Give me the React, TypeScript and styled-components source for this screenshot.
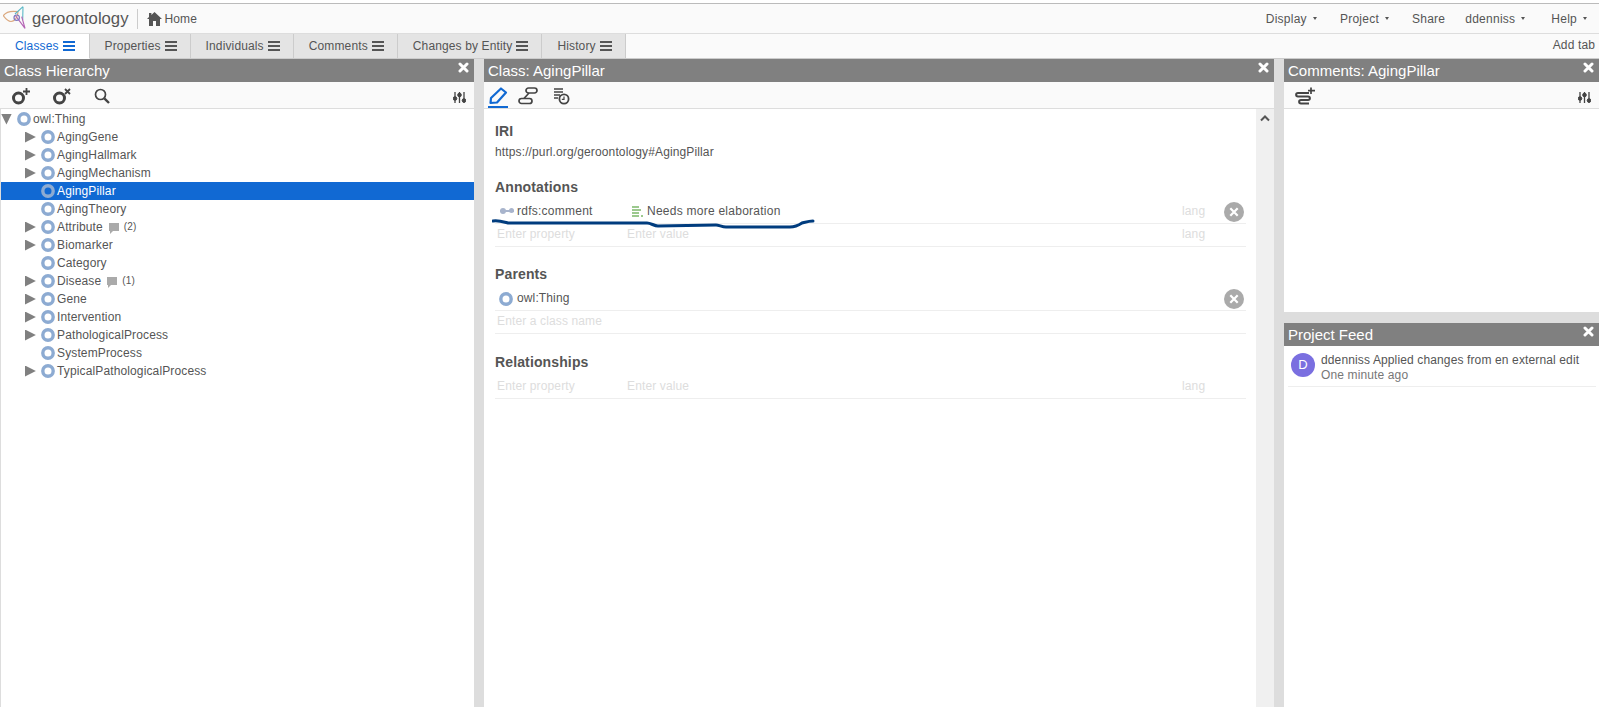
import { ReactNode } from 'react';
import styled, { createGlobalStyle } from 'styled-components';

const treeRows = [
  { name: 'AgingGene', expandable: true },
  { name: 'AgingHallmark', expandable: true },
  { name: 'AgingMechanism', expandable: true },
  { name: 'AgingPillar', selected: true },
  { name: 'AgingTheory' },
  { name: 'Attribute', expandable: true, comments: 2 },
  { name: 'Biomarker', expandable: true },
  { name: 'Category' },
  { name: 'Disease', expandable: true, comments: 1 },
  { name: 'Gene', expandable: true },
  { name: 'Intervention', expandable: true },
  { name: 'PathologicalProcess', expandable: true },
  { name: 'SystemProcess' },
  { name: 'TypicalPathologicalProcess', expandable: true },
];

const tabs = ['Classes', 'Properties', 'Individuals', 'Comments', 'Changes by Entity', 'History'];

const Logo = () => (
  <svg width="24" height="25" viewBox="0 0 24 25" fill="none">
    <path
      d="M0.3 9.7 C3 6 8 4.5 15 5.7 C15 10 12 15.5 8 15.5 C4.5 15.5 2 12 0.3 9.7Z"
      stroke="#dba97f"
      strokeWidth="1.2"
    />
    <path d="M20 0.7 L12 8 M20 0.7 L19.7 14" stroke="#5ab8c6" strokeWidth="1.1" />
    <path d="M12 9 L22 22.3 L18.7 10.7" stroke="#b565b5" strokeWidth="1.2" />
    <circle cx="13.7" cy="11.7" r="2.7" stroke="#7f78c0" strokeWidth="1.2" />
  </svg>
);

const HomeIcon = () => (
  <svg width="15" height="14" viewBox="0 0 15 14">
    <path fill="#555" d="M7.5 0 L15 7 H13 V14 H9 V9 H6 V14 H2 V7 H0 L2 5.1 V1 H4.4 V2.9Z" />
  </svg>
);

const CloseIcon = () => (
  <svg width="11" height="11" viewBox="0 0 11 11">
    <path d="M2 2 L9 9 M9 2 L2 9" stroke="#fff" strokeWidth="3" strokeLinecap="round" />
  </svg>
);

const ClassIcon = () => (
  <svg width="14" height="14" viewBox="0 0 14 14">
    <circle cx="7" cy="7" r="5.2" fill="none" stroke="#8dabd2" strokeWidth="3.4" />
  </svg>
);

const ClassActionIcon = ({ mark }: { mark: 'add' | 'remove' }) => (
  <svg width="20" height="18" viewBox="0 0 20 18" fill="none" stroke="#444">
    <circle cx="7.5" cy="11" r="5" strokeWidth="3" />
    {mark === 'add' ? (
      <path d="M15.5 1 V8 M12 4.5 H19" strokeWidth="1.8" />
    ) : (
      <path d="M13 2 L18 7 M18 2 L13 7" strokeWidth="1.8" />
    )}
  </svg>
);

const SearchIcon = () => (
  <svg width="16" height="16" viewBox="0 0 16 16" fill="none" stroke="#444">
    <circle cx="6.5" cy="6.5" r="5" strokeWidth="1.7" />
    <path d="M10.3 10.3 L15 15" strokeWidth="2.4" />
  </svg>
);

const SlidersIcon = () => (
  <SlidersSvg width="13" height="11" viewBox="0 0 13 11" fill="#444" stroke="#444">
    <path d="M2 0 V11 M6.5 0 V11 M11 0 V11" strokeWidth="1.3" />
    <circle cx="2" cy="6.5" r="1.8" />
    <circle cx="6.5" cy="3" r="1.8" />
    <circle cx="11" cy="8.5" r="1.8" />
  </SlidersSvg>
);

const PencilIcon = () => (
  <svg width="20" height="18" viewBox="0 0 20 18" fill="none" stroke="#1169d3">
    <path d="M13 1.5 L18 5.5 L9 15.5 L2.5 16 L3 11Z" strokeWidth="2.2" strokeLinejoin="round" />
  </svg>
);

const RouteIcon = () => (
  <svg width="20" height="18" viewBox="0 0 20 18" fill="none" stroke="#444" strokeWidth="1.7">
    <rect x="8" y="1" width="11" height="5" rx="2.5" />
    <rect x="1" y="11.5" width="13" height="5" rx="2.5" />
    <path d="M11 6 L6 11.5" />
  </svg>
);

const HistoryIcon = () => (
  <svg width="17" height="18" viewBox="0 0 17 18" fill="none" stroke="#444">
    <path d="M1 2 H10 M1 5 H10 M1 8 H7 M1 11 H5" strokeWidth="1.4" />
    <circle cx="11" cy="12" r="4.6" strokeWidth="1.8" />
    <path d="M11 9.5 V12.3 H8.8" strokeWidth="1.2" />
  </svg>
);

const CommentAddIcon = () => (
  <svg width="21" height="19" viewBox="0 0 21 19" fill="none" stroke="#444">
    <path
      d="M14 6 H3 C0.5 6 0.5 9.5 3 9.5 H13 C15.5 9.5 15.5 13 13 13 H6 C3.5 13 3.5 16.5 6 16.5 H14"
      strokeWidth="2"
    />
    <path d="M16 0.5 V7 M13 3.7 H20" strokeWidth="1.7" />
  </svg>
);

const Bars = styled('span')<{ $active?: boolean }>`
  display: inline-block;
  width: 12px;
  height: 2px;
  padding: 2px 0;
  box-sizing: content-box;
  border-top: 2px solid ${(p) => (p.$active ? '#1169d3' : '#555')};
  border-bottom: 2px solid ${(p) => (p.$active ? '#1169d3' : '#555')};
  background: ${(p) => (p.$active ? '#1169d3' : '#555')};
  background-clip: content-box;
`;

const Panel = ({
  title,
  toolbar,
  inset,
  children,
}: {
  title: string;
  toolbar?: ReactNode;
  inset?: number;
  children?: ReactNode;
}) => (
  <>
    <PanelHeader>
      <PanelTitle>{title}</PanelTitle>
      <CloseIcon />
    </PanelHeader>
    {toolbar && <Toolbar $inset={inset ?? 11}>{toolbar}</Toolbar>}
    {children}
  </>
);

const App = () => (
  <>
    <GlobalStyle />
    <Page>
      <NavBar>
        <LogoSlot>
          <Logo />
        </LogoSlot>
        <Brand>geroontology</Brand>
        <HomeLink>
          <HomeIcon />
          Home
        </HomeLink>
        <NavMenu>
          <NavItem>
            Display<Caret />
          </NavItem>
          <NavItem>
            Project<Caret />
          </NavItem>
          <NavItem>Share</NavItem>
          <NavItem $trailing={3}>
            ddenniss<Caret />
          </NavItem>
          <NavItem>
            Help<Caret />
          </NavItem>
        </NavMenu>
      </NavBar>

      <TabBar>
        {tabs.map((tab, index) => (
          <Tab key={tab} $active={index === 0}>
            {tab}
            <Bars $active={index === 0} />
          </Tab>
        ))}
        <AddTab>Add tab</AddTab>
      </TabBar>

      <Main>
        <HierarchyColumn>
          <Panel
            title="Class Hierarchy"
            toolbar={
              <>
                <ToolSlot $width={41}>
                  <ClassActionIcon mark="add" />
                </ToolSlot>
                <ToolSlot $width={42}>
                  <ClassActionIcon mark="remove" />
                </ToolSlot>
                <ToolSlot $width={40}>
                  <SearchIcon />
                </ToolSlot>
                <ToolEnd>
                  <SlidersIcon />
                </ToolEnd>
              </>
            }
          >
            <Tree>
              <TreeRow>
                <Twisty $open />
                <ClassIcon />
                <TreeLabel>owl:Thing</TreeLabel>
              </TreeRow>
              {treeRows.map((row) => (
                <TreeRow key={row.name} $selected={row.selected} $child>
                  {row.expandable ? <Twisty /> : <TwistyGap />}
                  <ClassIcon />
                  <TreeLabel>{row.name}</TreeLabel>
                  {row.comments && (
                    <>
                      <CommentBubble />
                      <CommentCount>({row.comments})</CommentCount>
                    </>
                  )}
                </TreeRow>
              ))}
            </Tree>
          </Panel>
        </HierarchyColumn>

        <ClassColumn>
          <Panel
            title="Class: AgingPillar"
            inset={4}
            toolbar={
              <>
                <ViewSlot $active $width={20}>
                  <PencilIcon />
                </ViewSlot>
                <ViewSlot $width={25}>
                  <RouteIcon />
                </ViewSlot>
                <ViewSlot $width={17}>
                  <HistoryIcon />
                </ViewSlot>
              </>
            }
          >
            <ClassBody>
              <Form>
                <Section>
                  <Heading>IRI</Heading>
                  <Iri>https://purl.org/geroontology#AgingPillar</Iri>
                </Section>

                <Section>
                  <Heading>Annotations</Heading>
                  <Row>
                    <Cell $inset={5}>
                      <PropertyDot />
                      rdfs:comment
                    </Cell>
                    <Cell $inset={7}>
                      <ValueLines />
                      Needs more elaboration
                    </Cell>
                    <Hint>lang</Hint>
                    <RemoveButton />
                    <Scribble width="326" height="10" viewBox="0 0 326 10" fill="none">
                      <path
                        d="M1 2 C6 1 12 3 16 4 L155 4 C159 4 162 7 166 7 L224 6 C227 6 230 8 234 8 L298 8 C303 8 307 6 310 4 C314 3 317 2 321 2"
                        stroke="#003c7e"
                        strokeWidth="3"
                        strokeLinecap="round"
                      />
                    </Scribble>
                  </Row>
                  <Row>
                    <Hint>Enter property</Hint>
                    <Hint>Enter value</Hint>
                    <Hint>lang</Hint>
                  </Row>
                </Section>

                <Section>
                  <Heading>Parents</Heading>
                  <ParentRow>
                    <ClassIcon />
                    <ParentName>owl:Thing</ParentName>
                    <RemoveButton />
                  </ParentRow>
                  <Row>
                    <Hint>Enter a class name</Hint>
                  </Row>
                </Section>

                <Section>
                  <LastHeading>Relationships</LastHeading>
                  <Row>
                    <Hint>Enter property</Hint>
                    <Hint>Enter value</Hint>
                    <Hint>lang</Hint>
                  </Row>
                </Section>
              </Form>
              <ScrollTrack>
                <ScrollArrow viewBox="0 0 12 8" width="12" height="8" fill="none">
                  <path d="M2 6.5 L6 2.5 L10 6.5" stroke="#555" strokeWidth="2" />
                </ScrollArrow>
              </ScrollTrack>
            </ClassBody>
          </Panel>
        </ClassColumn>

        <SideColumn>
          <CommentsPane>
            <Panel
              title="Comments: AgingPillar"
              toolbar={
                <>
                  <ToolSlot $width={40}>
                    <CommentAddIcon />
                  </ToolSlot>
                  <ToolEnd>
                    <SlidersIcon />
                  </ToolEnd>
                </>
              }
            />
          </CommentsPane>
          <FeedPane>
            <Panel title="Project Feed">
              <FeedItem>
                <Avatar>D</Avatar>
                <FeedText>
                  <div>ddenniss Applied changes from en external edit</div>
                  <FeedTime>One minute ago</FeedTime>
                </FeedText>
              </FeedItem>
            </Panel>
          </FeedPane>
        </SideColumn>
      </Main>
    </Page>
  </>
);

const GlobalStyle = createGlobalStyle`
  html, body {
    margin: 0;
    padding: 0;
    height: 100%;
    overflow: hidden;
  }
  body {
    font-family: "Liberation Sans", Arial, sans-serif;
    font-size: 12px;
    letter-spacing: 0.13px;
    color: #555;
  }
`;

const Page = styled('div')`
  height: 100vh;
  display: flex;
  flex-direction: column;
  box-sizing: border-box;
  padding-top: 3px;
  background: #fff;
`;

const NavBar = styled('header')`
  height: 31px;
  flex: none;
  box-sizing: border-box;
  display: flex;
  align-items: center;
  background: #fafafa;
  border-top: 1px solid #bbb;
  border-bottom: 1px solid #ddd;
  padding: 0 9px 0 3px;
`;

const LogoSlot = styled('div')`
  width: 29px;
  height: 25px;
`;

const Brand = styled('div')`
  font-size: 16.7px;
  letter-spacing: 0;
  color: #555;
  padding-right: 8px;
  border-right: 1px solid #ccc;
  line-height: 20px;
`;

const HomeLink = styled('div')`
  display: flex;
  align-items: center;
  gap: 3px;
  margin-left: 9px;
  color: #555;
`;

const NavMenu = styled('nav')`
  margin-left: auto;
  display: flex;
  gap: 20px;
  letter-spacing: 0.25px;
`;

const NavItem = styled('div')<{ $trailing?: number }>`
  display: flex;
  align-items: center;
  margin-right: ${(p) => p.$trailing ?? 0}px;
  color: #555;
`;

const Caret = styled('span')`
  margin: 0 3px 0 6px;
  width: 0;
  height: 0;
  border-left: 2.5px solid transparent;
  border-right: 2.5px solid transparent;
  border-top: 3px solid #555;
`;

const TabBar = styled('div')`
  height: 25px;
  flex: none;
  box-sizing: border-box;
  display: flex;
  background: #fafafa;
  border-bottom: 1px solid #ccc;
`;

const Tab = styled('div')<{ $active?: boolean }>`
  display: flex;
  align-items: center;
  gap: 4px;
  padding: 0 ${(p) => (p.$active ? '14px' : '13px')} 0 15px;
  box-sizing: border-box;
  height: 25px;
  color: ${(p) => (p.$active ? '#1169d3' : '#555')};
  background: ${(p) => (p.$active ? '#fff' : '#e4e4e4')};
  border-right: 1px solid #ccc;
  border-bottom: ${(p) => (p.$active ? '1px solid #fff' : '1px solid #ccc')};
`;

const AddTab = styled('div')`
  margin-left: auto;
  padding-right: 4px;
  line-height: 23px;
  color: #555;
`;

const Main = styled('main')`
  flex: 1;
  min-height: 0;
  display: flex;
  gap: 10px;
  background: #ddd;
`;

const Column = styled('section')`
  display: flex;
  flex-direction: column;
  min-height: 0;
`;

const HierarchyColumn = styled(Column)`
  width: 474px;
  background: #fff;
`;

const ClassColumn = styled(Column)`
  width: 790px;
  background: #fff;
`;

const SideColumn = styled(Column)`
  flex: 1;
  gap: 11px;
`;

const CommentsPane = styled(Column)`
  height: 253px;
  background: #fff;
`;

const FeedPane = styled(Column)`
  flex: 1;
  background: #fff;
`;

const PanelHeader = styled('div')`
  height: 23px;
  flex: none;
  display: flex;
  justify-content: space-between;
  background: #808080;
  color: #fff;
  padding: 0 5px 0 4px;

  svg {
    margin-top: 3px;
  }
`;

const PanelTitle = styled('div')`
  font-size: 15px;
  letter-spacing: 0;
  line-height: 23px;
`;

const Toolbar = styled('div')<{ $inset: number }>`
  height: 27px;
  flex: none;
  box-sizing: border-box;
  display: flex;
  align-items: center;
  background: #fafafa;
  border-bottom: 1px solid #ddd;
  padding: 0 8px 0 ${(p) => p.$inset}px;
`;

const ToolSlot = styled('div')<{ $width: number }>`
  width: ${(p) => p.$width}px;
  display: flex;
  margin-top: 2px;
`;

const ToolEnd = styled('div')`
  margin-left: auto;
  display: flex;
`;

const SlidersSvg = styled('svg')`
  margin-top: 5px;
`;

const ViewSlot = styled('div')<{ $active?: boolean; $width: number }>`
  width: ${(p) => p.$width}px;
  height: 25px;
  margin-right: 10px;
  padding-top: 4px;
  box-sizing: border-box;
  border-bottom: 2px solid ${(p) => (p.$active ? '#1169d3' : 'transparent')};
`;

const Tree = styled('div')`
  flex: 1;
  padding-top: 1px;
  border-left: 1px solid #ddd;
`;

const TreeRow = styled('div')<{ $selected?: boolean; $child?: boolean }>`
  height: 18px;
  display: flex;
  align-items: center;
  padding-left: ${(p) => (p.$child ? '24px' : '0')};
  background: ${(p) => (p.$selected ? '#1169d3' : 'transparent')};
  color: ${(p) => (p.$selected ? '#fff' : '#555')};
`;

const TreeLabel = styled('span')`
  margin-left: 2px;
`;

const Twisty = styled('span')<{ $open?: boolean }>`
  width: 16px;
  height: 11px;
  flex: none;
  background: #808080;
  clip-path: ${(p) =>
    p.$open ? 'polygon(0 0, 68% 0, 34% 100%)' : 'polygon(0 0, 68% 50%, 0 100%)'};
`;

const TwistyGap = styled('span')`
  width: 16px;
  flex: none;
`;

const CommentBubble = styled('span')`
  width: 10px;
  height: 8px;
  margin-left: 6px;
  background: #aaa;
  position: relative;

  &::after {
    content: '';
    position: absolute;
    left: 1px;
    top: 8px;
    border-top: 3px solid #aaa;
    border-right: 3px solid transparent;
  }
`;

const CommentCount = styled('span')`
  font-size: 10px;
  margin-left: 5px;
  margin-top: -2px;
`;

const ClassBody = styled('div')`
  flex: 1;
  min-height: 0;
  display: flex;
`;

const Form = styled('div')`
  flex: 1;
  padding: 13px 10px 0 11px;
`;

const Section = styled('div')`
  margin-bottom: 18px;
`;

const Heading = styled('h3')`
  margin: 0 0 5px;
  font-size: 14px;
  line-height: 18px;
  font-weight: bold;
  color: #555;
`;

const LastHeading = styled(Heading)`
  padding-top: 1px;
`;

const Iri = styled('div')`
  line-height: 18px;
  margin: -2px 0 -1px;
`;

const Row = styled('div')`
  position: relative;
  height: 23px;
  box-sizing: border-box;
  display: grid;
  grid-template-columns: 130px 1fr 44px 22px;
  align-items: center;
  border-bottom: 1px solid #eee;
`;

const Cell = styled('div')<{ $inset: number }>`
  display: flex;
  align-items: center;
  padding: 0 0 2px ${(p) => p.$inset}px;
  letter-spacing: 0.25px;
`;

const Hint = styled('div')`
  color: #ddd;
  padding: 0 0 2px 2px;
`;

const PropertyDot = styled('span')`
  width: 14px;
  height: 2px;
  margin-right: 3px;
  background: #a8b4cc;
  position: relative;

  &::before,
  &::after {
    content: '';
    position: absolute;
    top: -2px;
    width: 6px;
    height: 6px;
    border-radius: 50%;
    background: #a8b4cc;
  }
  &::before {
    left: 0;
  }
  &::after {
    right: 0;
    width: 5px;
    height: 5px;
  }
`;

const ValueLines = styled('span')`
  width: 11px;
  height: 11px;
  margin-right: 4px;
  background:
    linear-gradient(#9cc98e, #9cc98e) 0 0 / 7px 2px no-repeat,
    linear-gradient(#9cc98e, #9cc98e) 0 3px / 9px 2px no-repeat,
    linear-gradient(#9cc98e, #9cc98e) 0 6px / 7px 2px no-repeat,
    linear-gradient(#9cc98e, #9cc98e) 0 9px / 7px 2px no-repeat,
    linear-gradient(#9cc98e, #9cc98e) 9px 9px / 2px 2px no-repeat;
`;

const RemoveButton = () => (
  <RemoveCircle viewBox="0 0 20 20" width="20" height="20">
    <circle cx="10" cy="10" r="10" fill="#aaa" />
    <path d="M6.3 6.3 L13.7 13.7 M13.7 6.3 L6.3 13.7" stroke="#fff" strokeWidth="2.2" />
  </RemoveCircle>
);

const RemoveCircle = styled('svg')`
  display: block;
`;

const Scribble = styled('svg')`
  position: absolute;
  left: -3px;
  top: 18px;
`;

const ParentRow = styled('div')`
  height: 23px;
  box-sizing: border-box;
  display: flex;
  align-items: center;
  padding: 0 2px 0 4px;
  border-bottom: 1px solid #eee;
`;

const ParentName = styled('span')`
  margin: 0 auto 2px 4px;
`;

const ScrollTrack = styled('div')`
  width: 18px;
  flex: none;
  background: #f0f0f0;
  display: flex;
  justify-content: center;
  align-items: flex-start;
`;

const ScrollArrow = styled('svg')`
  margin-top: 5px;
`;

const FeedItem = styled('div')`
  display: flex;
  gap: 6px;
  margin: 0 3px 0 4px;
  padding: 7px 0 3px 3px;
  border-bottom: 1px solid #eee;
`;

const Avatar = styled('div')`
  width: 24px;
  height: 24px;
  flex: none;
  border-radius: 50%;
  background: #7a6fe0;
  color: #fff;
  font-size: 13px;
  line-height: 24px;
  text-align: center;
`;

const FeedText = styled('div')`
  line-height: 15px;
`;

const FeedTime = styled('div')`
  color: #777;
`;

export default App;
